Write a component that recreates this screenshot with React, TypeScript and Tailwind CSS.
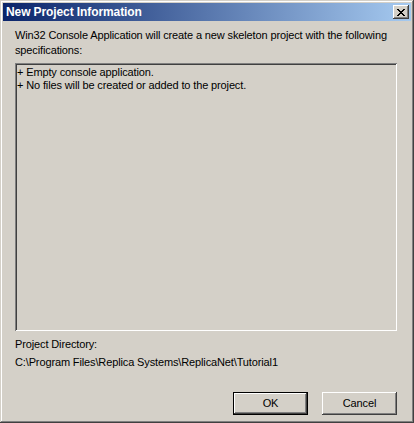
import React from "react";

const font = { fontFamily: '"Liberation Sans", Arial, sans-serif' };

function CloseIcon() {
  return (
    <svg width="8" height="7" viewBox="0 0 8 7" shapeRendering="crispEdges">
      <path d="M0 0h2v1H0zM6 0h2v1H6zM1 1h2v1H1zM5 1h2v1H5zM2 2h4v1H2zM3 3h2v1H3zM2 4h4v1H2zM1 5h2v1H1zM5 5h2v1H5zM0 6h2v1H0zM6 6h2v1H6z" fill="#000" />
    </svg>
  );
}

export default function App() {
  return (
    <div
      className="w-[414px] h-[423px] bg-[#d4d0c8] p-[3px] flex flex-col text-black shadow-[inset_-1px_-1px_0_#404040,inset_1px_1px_0_#d4d0c8,inset_-2px_-2px_0_#808080,inset_2px_2px_0_#ffffff]"
      style={font}
    >
      <div className="h-[18px] shrink-0 flex items-center justify-between pl-[3px] pr-[2px] bg-[linear-gradient(to_right,#0a246a,#a6caf0)]">
        <span className="text-white font-bold text-[12px] leading-[18px] tracking-[-0.1px]">New Project Information</span>
        <div className="w-[16px] h-[14px] bg-[#d4d0c8] flex items-center justify-center shadow-[inset_-1px_-1px_0_#404040,inset_1px_1px_0_#ffffff,inset_-2px_-2px_0_#808080]">
          <CloseIcon />
        </div>
      </div>
      <div className="flex-1 flex flex-col pl-[12px] pr-[14px] text-[11px] tracking-[-0.13px]">
        <p className="mt-[7px] leading-[15px]">
          Win32 Console Application will create a new skeleton project with the following specifications:
        </p>
        <div className="mt-[5px] h-[268px] pt-[3px] pl-[2px] leading-[13px] shadow-[inset_1px_1px_0_#808080,inset_-1px_-1px_0_#ffffff,inset_2px_2px_0_#404040,inset_-2px_-2px_0_#d4d0c8]">
          <div>+ Empty console application.</div>
          <div>+ No files will be created or added to the project.</div>
        </div>
        <div className="mt-[6px] leading-[15px]">Project Directory:</div>
        <div className="mt-[3px] leading-[15px]">C:\Program Files\Replica Systems\ReplicaNet\Tutorial1</div>
        <div className="mt-auto mb-[5px] flex justify-end gap-[14px]">
          <button className="w-[75px] h-[23px] bg-[#d4d0c8] shadow-[inset_0_0_0_1px_#000000,inset_-2px_-2px_0_#404040,inset_2px_2px_0_#ffffff,inset_-3px_-3px_0_#808080]">
            OK
          </button>
          <button className="w-[75px] h-[23px] bg-[#d4d0c8] shadow-[inset_-1px_-1px_0_#404040,inset_1px_1px_0_#ffffff,inset_-2px_-2px_0_#808080]">
            Cancel
          </button>
        </div>
      </div>
    </div>
  );
}
